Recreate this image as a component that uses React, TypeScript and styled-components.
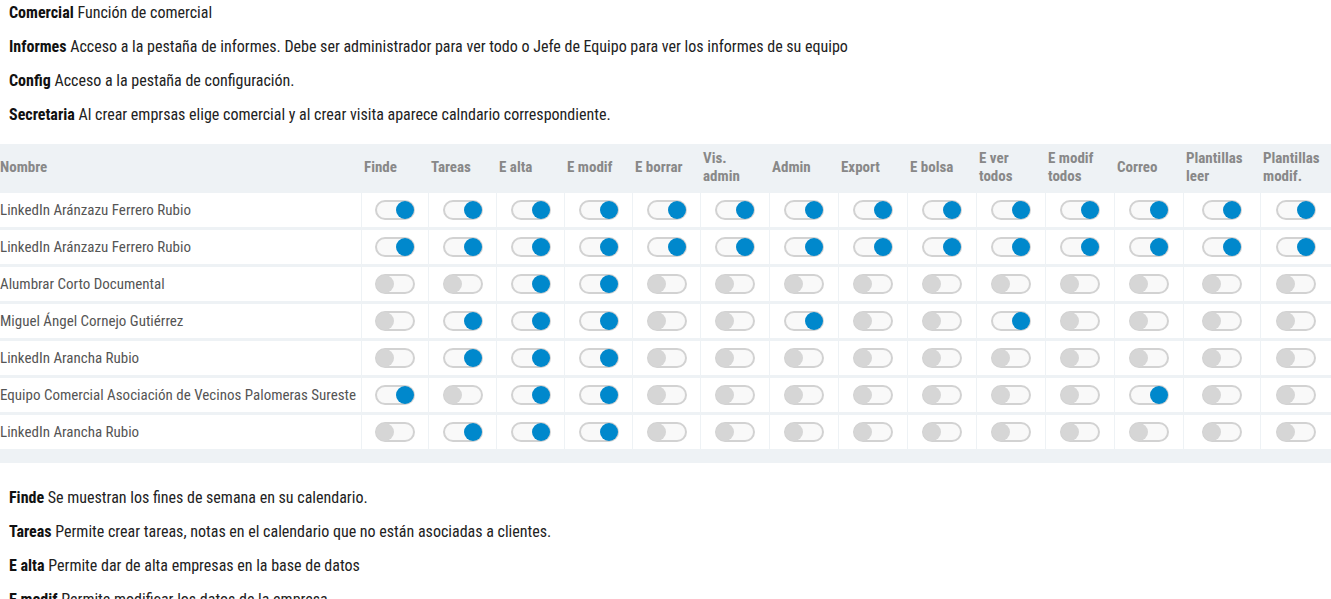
import React from "react";
import styled, { createGlobalStyle } from "styled-components";

const GlobalStyle = createGlobalStyle`
  html, body { margin: 0; padding: 0; background: #ffffff; }
  body {
    font-family: "Roboto Condensed", "Roboto", "Liberation Sans", sans-serif;
    font-stretch: condensed;
    font-size: 16px;
    color: #222222;
    overflow: hidden;
  }
`;

const Page = styled.div`
  width: 1331px;
  padding-top: 3px;
`;

const Notes = styled.div<{ $top?: boolean }>`
  display: flex;
  flex-direction: column;
  gap: 14px;
  padding: 0 0 0 9px;
  margin: ${(p) => (p.$top ? "0 0 19px" : "25px 0 0")};
`;

const Note = styled.p`
  margin: 0;
  font-size: 16px;
  line-height: 20px;
  color: #222222;
  white-space: nowrap;
  b { font-weight: 700; color: #111111; }
`;

const COLS = "361px 67px 68px 68px 68px 68px 69px 69px 69px 69px 69px 69px 69px 77px 71px";

const Table = styled.div`
  display: flex;
  flex-direction: column;
  gap: 3px;
  background: #eef2f5;
  padding-bottom: 14px;
  font-size: 15px;
`;

const HeaderRow = styled.div`
  display: grid;
  grid-template-columns: ${COLS};
  height: 46px;
  align-items: center;
`;

const HeadCell = styled.div`
  padding-left: 3px;
  font-weight: 700;
  color: #888888;
  line-height: 18px;
  &:first-child { padding-left: 0; }
`;

const Row = styled.div`
  display: grid;
  grid-template-columns: ${COLS};
  height: 34px;
  background: #ffffff;
`;

const NameCell = styled.div`
  display: flex;
  align-items: center;
  color: #555555;
  white-space: nowrap;
`;

const ToggleCell = styled.div`
  display: flex;
  align-items: center;
  justify-content: center;
  border-left: 1px solid #eef2f5;
`;

const Track = styled.span<{ $on: boolean }>`
  box-sizing: border-box;
  width: 40px;
  height: 20px;
  border-radius: 10px;
  border: 2px solid #d2d2d2;
  background: #f9f9f9;
  display: flex;
  align-items: center;
  justify-content: ${(p) => (p.$on ? "flex-end" : "flex-start")};
`;

const Knob = styled.span<{ $on: boolean }>`
  width: 18px;
  height: 18px;
  border-radius: 50%;
  margin: 0 -1px;
  background: ${(p) => (p.$on ? "#0088cc" : "#d6d6d6")};
`;

const headers: React.ReactNode[] = [
  "Nombre",
  "Finde",
  "Tareas",
  "E alta",
  "E modif",
  "E borrar",
  <>Vis.<br />admin</>,
  "Admin",
  "Export",
  "E bolsa",
  <>E ver<br />todos</>,
  <>E modif<br />todos</>,
  "Correo",
  <>Plantillas<br />leer</>,
  <>Plantillas<br />modif.</>,
];

const rows: { name: string; v: string }[] = [
  { name: "LinkedIn Aránzazu Ferrero Rubio", v: "11111111111111" },
  { name: "LinkedIn Aránzazu Ferrero Rubio", v: "11111111111111" },
  { name: "Alumbrar Corto Documental", v: "00110000000000" },
  { name: "Miguel Ángel Cornejo Gutiérrez", v: "01110010010000" },
  { name: "LinkedIn Arancha Rubio", v: "01110000000000" },
  { name: "Equipo Comercial Asociación de Vecinos Palomeras Sureste", v: "10110000000100" },
  { name: "LinkedIn Arancha Rubio", v: "01110000000000" },
];

const Toggle = ({ on }: { on: boolean }) => (
  <Track $on={on}>
    <Knob $on={on} />
  </Track>
);

export default function App() {
  return (
    <Page>
      <GlobalStyle />
      <Notes $top>
        <Note><b>Comercial</b> Función de comercial</Note>
        <Note><b>Informes</b> Acceso a la pestaña de informes. Debe ser administrador para ver todo o Jefe de Equipo para ver los informes de su equipo</Note>
        <Note><b>Config</b> Acceso a la pestaña de configuración.</Note>
        <Note><b>Secretaria</b> Al crear emprsas elige comercial y al crear visita aparece calndario correspondiente.</Note>
      </Notes>
      <Table>
        <HeaderRow>
          {headers.map((h, i) => (
            <HeadCell key={i}>{h}</HeadCell>
          ))}
        </HeaderRow>
        {rows.map((r, i) => (
          <Row key={i}>
            <NameCell>{r.name}</NameCell>
            {r.v.split("").map((c, j) => (
              <ToggleCell key={j}>
                <Toggle on={c === "1"} />
              </ToggleCell>
            ))}
          </Row>
        ))}
      </Table>
      <Notes>
        <Note><b>Finde</b> Se muestran los fines de semana en su calendario.</Note>
        <Note><b>Tareas</b> Permite crear tareas, notas en el calendario que no están asociadas a clientes.</Note>
        <Note><b>E alta</b> Permite dar de alta empresas en la base de datos</Note>
        <Note><b>E modif</b> Permite modificar los datos de la empresa</Note>
      </Notes>
    </Page>
  );
}
